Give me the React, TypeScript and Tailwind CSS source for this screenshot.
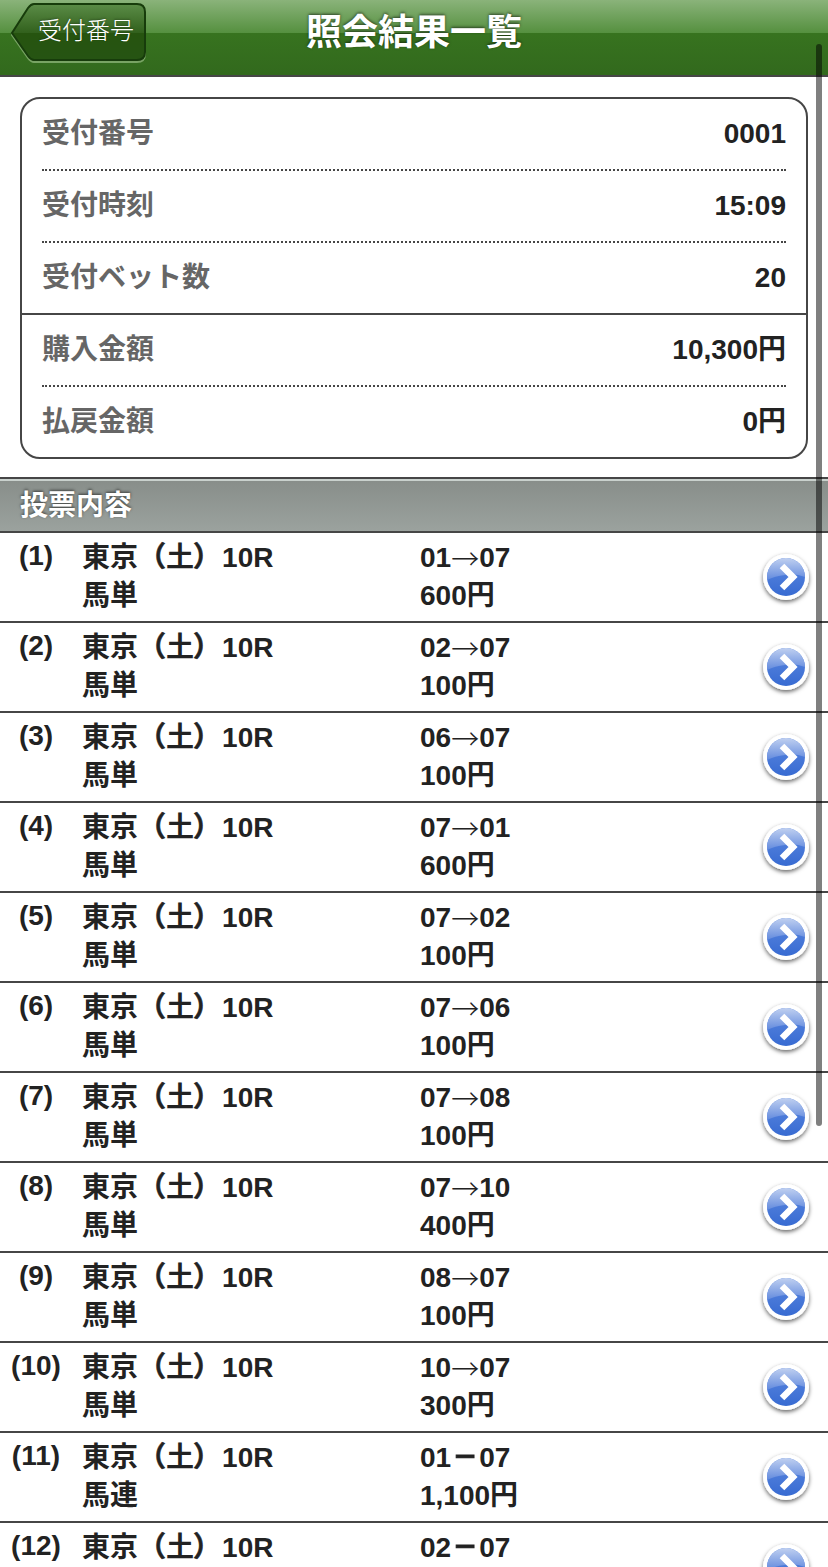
const summary = [
  { label: '受付番号', value: '0001', border: 'dotted' },
  { label: '受付時刻', value: '15:09', border: 'dotted' },
  { label: '受付ベット数', value: '20', border: 'solid' },
  { label: '購入金額', value: '10,300円', border: 'dotted' },
  { label: '払戻金額', value: '0円', border: 'none' },
];

const bets = [
  { type: '馬単', first: '01', sign: '→', second: '07', amount: '600円' },
  { type: '馬単', first: '02', sign: '→', second: '07', amount: '100円' },
  { type: '馬単', first: '06', sign: '→', second: '07', amount: '100円' },
  { type: '馬単', first: '07', sign: '→', second: '01', amount: '600円' },
  { type: '馬単', first: '07', sign: '→', second: '02', amount: '100円' },
  { type: '馬単', first: '07', sign: '→', second: '06', amount: '100円' },
  { type: '馬単', first: '07', sign: '→', second: '08', amount: '100円' },
  { type: '馬単', first: '07', sign: '→', second: '10', amount: '400円' },
  { type: '馬単', first: '08', sign: '→', second: '07', amount: '100円' },
  { type: '馬単', first: '10', sign: '→', second: '07', amount: '300円' },
  { type: '馬連', first: '01', sign: '－', second: '07', amount: '1,100円' },
  { type: '', first: '02', sign: '－', second: '07', amount: '' },
];

const BackButton = () => (
  <button className="relative ml-[9px] mt-[2px] h-[62px] w-[138px] text-left">
    <svg className="absolute inset-0" width="138" height="62" viewBox="0 0 138 62" fill="none">
      <defs>
        <linearGradient id="back" x1="0" y1="0" x2="0" y2="1">
          <stop offset="0" stopColor="#5b8c47" />
          <stop offset="0.51" stopColor="#32611d" />
          <stop offset="0.52" stopColor="#26540f" />
          <stop offset="1" stopColor="#265413" />
        </linearGradient>
      </defs>
      <path
        d="M25 4 H128 Q136 4 136 12 V52 Q136 60 128 60 H25 Q22 60 19 56 L3 33 L19 8 Q22 4 25 4 Z"
        stroke="#89b176"
        strokeOpacity="0.8"
        strokeWidth="2"
      />
      <path
        d="M25 2 H128 Q136 2 136 10 V50 Q136 58 128 58 H25 Q22 58 19 54 L3 31 L19 6 Q22 2 25 2 Z"
        fill="url(#back)"
        stroke="#173c0b"
        strokeWidth="2"
      />
    </svg>
    <span className="relative ml-[29px] block h-[58px] text-2xl leading-[53px] font-light text-white [text-shadow:0_-1px_2px_rgba(0,0,0,0.3)]">
      受付番号
    </span>
  </button>
);

const Chevron = () => (
  <svg className="mt-[2px] ml-auto shrink-0" width="56" height="60" viewBox="0 0 56 60">
    <defs>
      <linearGradient id="ball" x1="0" y1="0" x2="0" y2="1">
        <stop offset="0" stopColor="#5c88df" />
        <stop offset="1" stopColor="#386bd2" />
      </linearGradient>
      <linearGradient id="gloss" x1="0" y1="0" x2="0" y2="1">
        <stop offset="0" stopColor="#c0d0f0" />
        <stop offset="1" stopColor="#628ade" />
      </linearGradient>
      <filter id="shadow" x="-20%" y="-20%" width="140%" height="150%">
        <feDropShadow dx="0" dy="2" stdDeviation="2" floodColor="#000" floodOpacity="0.6" />
      </filter>
    </defs>
    <circle cx="28" cy="28" r="23" fill="#fff" filter="url(#shadow)" />
    <circle cx="28" cy="28" r="19" fill="url(#ball)" />
    <path d="M9 28 A19 19 0 0 1 47 28 Q37 24 27 26 Q17 27 9 31 Z" fill="url(#gloss)" />
    <path d="M24 17 L35 28 L24 39" fill="none" stroke="#fff" strokeWidth="6.5" />
  </svg>
);

const Sign = ({ sign }: { sign: string }) =>
  sign === '→' ? (
    <span className="w-7 text-center font-['Noto_Sans_CJK_JP',sans-serif] font-light">{sign}</span>
  ) : (
    <span className="w-7 scale-x-[0.9] text-center [-webkit-text-stroke:1px_#222]">{sign}</span>
  );

const App = () => {
  return (
    <div className="relative h-[1567px] w-[828px] overflow-hidden bg-white font-['Liberation_Sans','Noto_Sans_CJK_JP',sans-serif] text-[28px] leading-[38px] font-bold text-[#222]">
      <header className="grid h-[77px] grid-cols-[200px_1fr_200px] border-b-2 border-[#464646] bg-[linear-gradient(to_bottom,#8ab37a_0px,#55903f_33px,#37731f_33px,#32691d_75px)]">
        <BackButton />
        <h1 className="text-center text-4xl leading-[66px] text-white [text-shadow:0_-1px_3px_rgba(0,0,0,0.6)]">
          照会結果一覧
        </h1>
      </header>

      <section className="mx-5 mt-5 rounded-[20px] border-2 border-[#464646]">
        {summary.map((row) => (
          <div key={row.label} className={row.border === 'solid' ? 'border-b-2 border-[#464646]' : ''}>
            <div
              className={`mx-5 flex justify-between leading-[70px] ${
                row.border === 'dotted' ? 'h-[72px] border-b-2 border-dotted border-[#464646]' : 'h-[70px]'
              }`}
            >
              <span className="text-[#666]">{row.label}</span>
              <span>{row.value}</span>
            </div>
          </div>
        ))}
      </section>

      <h2 className="mt-[18px] h-[56px] border-y-2 border-[#464646] bg-[linear-gradient(to_bottom,#c9d1cd_0px,#c9d1cd_2px,#888e8a_2px,#9ba29e_52px)] pl-5 leading-[53px] text-white [text-shadow:0_-1px_3px_rgba(0,0,0,0.6)]">
        投票内容
      </h2>

      <ul>
        {bets.map((bet, i) => (
          <li key={i} className="flex h-[90px] border-b-2 border-[#464646] pt-[6px]">
            <span className="-mt-[2px] w-[72px] text-center">({i + 1})</span>
            <div className="ml-[10px] w-[338px]">
              <p>
                東京<span className="[-webkit-text-stroke:0.6px_#222]">（</span>土
                <span className="inline-block -translate-x-px [-webkit-text-stroke:0.6px_#222]">）</span>10R
              </p>
              <p>{bet.type}</p>
            </div>
            <div>
              <p className="flex">
                {bet.first}
                <Sign sign={bet.sign} />
                {bet.second}
              </p>
              <p>{bet.amount}</p>
            </div>
            <div className="mr-[14px] ml-auto pt-[8px]">
              <Chevron />
            </div>
          </li>
        ))}
      </ul>

      {/* Scroll indicator */}
      <div className="absolute top-[44px] right-[6px] h-[1082px] w-[6px] rounded-full bg-black/50" />
    </div>
  );
};

export default App;
